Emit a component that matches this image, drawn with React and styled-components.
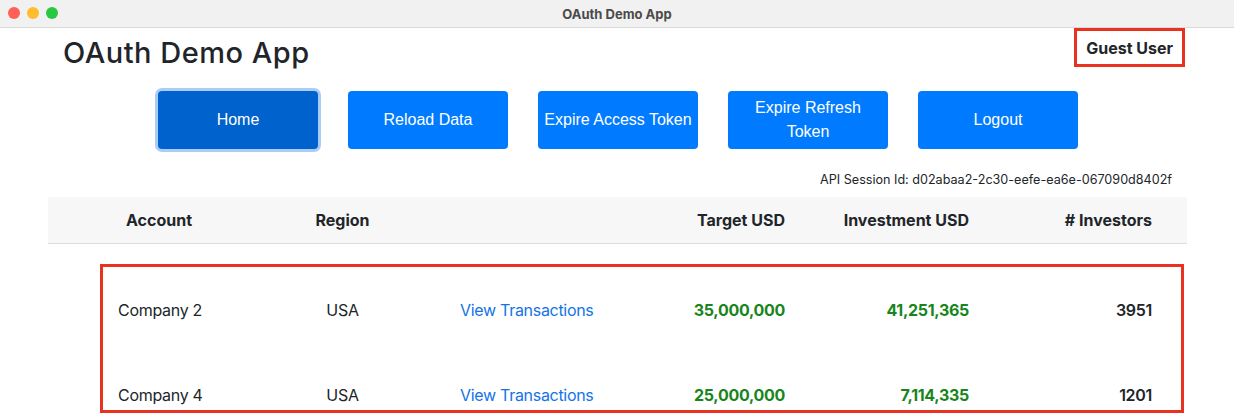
import React from "react";
import styled, { createGlobalStyle } from "styled-components";

const GlobalStyle = createGlobalStyle`
  body {
    margin: 0;
    background: #fff;
    font-family: Inter, "Noto Sans", sans-serif;
    color: #212529;
  }
`;

const Window = styled.div`
  width: 1234px;
  height: 417px;
  overflow: hidden;
  background: #fff;
`;

const TitleBar = styled.div`
  height: 27px;
  display: flex;
  align-items: center;
  justify-content: center;
  position: relative;
  background: #f1f1f1;
  border-bottom: 1px solid #dadada;
  font-size: 13px;
  font-weight: 700;
  color: #4a4a4a;
`;

const Lights = styled.div`
  position: absolute;
  left: 8px;
  top: 7px;
  display: flex;
  gap: 7px;
`;

const Light = styled.span`
  width: 12px;
  height: 12px;
  border-radius: 50%;
  background: ${(p) => p.color};
`;

const Header = styled.div`
  display: flex;
  justify-content: space-between;
  align-items: flex-start;
  padding: 0 49px 0 63px;
`;

const Title = styled.h1`
  margin: 8px 0 0;
  font-size: 29px;
  line-height: 34px;
  letter-spacing: 0.5px;
  font-weight: 500;
  color: #212529;
`;

const UserBadge = styled.div`
  border: 3px solid #e8321f;
  padding: 0 9px;
  height: 33px;
  display: flex;
  align-items: center;
  font-size: 16px;
  font-weight: 700;
  color: #212529;
`;

const Toolbar = styled.div`
  display: flex;
  justify-content: center;
  gap: 30px;
  margin-top: 21px;
  padding-left: 2px;
`;

const Button = styled.button`
  width: 160px;
  height: 58px;
  padding: 0 4px;
  border: none;
  border-radius: 4px;
  background: ${(p) => (p.active ? "#0062cc" : "#007bff")};
  box-shadow: ${(p) => (p.active ? "0 0 0 3px #a9cdf7" : "none")};
  color: #fff;
  font-family: "Liberation Sans", Arial, sans-serif;
  font-size: 16px;
  line-height: 24px;
  cursor: pointer;
`;

const Session = styled.div`
  margin-top: 22px;
  padding-right: 62px;
  text-align: right;
  font-size: 12.6px;
  line-height: 18px;
  color: #212529;
`;

const TableArea = styled.div`
  margin: 8px 47px 0 48px;
`;

const Grid = styled.div`
  display: grid;
  grid-template-columns: ${(p) => p.first}px 145px 185px 185px 184px 183px;
  align-items: center;
`;

const HeadRow = styled(Grid)`
  height: 46px;
  background: #f7f7f7;
  border-bottom: 1px solid #dcdcdc;
  font-size: 16px;
  font-weight: 700;
`;

const Cell = styled.div`
  text-align: ${(p) => p.align || "left"};
  padding-left: ${(p) => p.indent || 0}px;
  color: ${(p) => (p.tone === "money" ? "#18851c" : p.tone === "link" ? "#1473e6" : "#212529")};
  font-weight: ${(p) => (p.tone === "money" ? 700 : p.tone === "count" ? 600 : "inherit")};
`;

const Rows = styled.div`
  margin: 20px 3px 0 52px;
  height: 143px;
  overflow: hidden;
  border: 3px solid #e8321f;
`;

const DataRow = styled(Grid)`
  height: 85px;
  font-size: 16px;
  letter-spacing: -0.3px;
`;

const Link = styled.a`
  color: inherit;
  text-decoration: none;
`;

const accounts = [
  { name: "Company 2", region: "USA", target: "35,000,000", invested: "41,251,365", investors: 3951 },
  { name: "Company 4", region: "USA", target: "25,000,000", invested: "7,114,335", investors: 1201 },
];

export default function App() {
  return (
    <Window>
      <GlobalStyle />
      <TitleBar>
        <Lights>
          <Light color="#fe5f57" />
          <Light color="#febc2e" />
          <Light color="#28c840" />
        </Lights>
        OAuth Demo App
      </TitleBar>

      <Header>
        <Title>OAuth Demo App</Title>
        <UserBadge>Guest User</UserBadge>
      </Header>

      <Toolbar>
        <Button active>Home</Button>
        <Button>Reload Data</Button>
        <Button>Expire Access Token</Button>
        <Button>Expire Refresh Token</Button>
        <Button>Logout</Button>
      </Toolbar>

      <Session>API Session Id: d02abaa2-2c30-eefe-ea6e-067090d8402f</Session>

      <TableArea>
        <HeadRow first={222}>
          <Cell align="center">Account</Cell>
          <Cell align="center">Region</Cell>
          <Cell />
          <Cell align="right">Target USD</Cell>
          <Cell align="right">Investment USD</Cell>
          <Cell align="right"># Investors</Cell>
        </HeadRow>

        <Rows>
          {accounts.map((a) => (
            <DataRow first={167} key={a.name}>
              <Cell indent={15}>{a.name}</Cell>
              <Cell align="center">{a.region}</Cell>
              <Cell indent={45} tone="link">
                <Link href="#">View Transactions</Link>
              </Cell>
              <Cell align="right" tone="money">{a.target}</Cell>
              <Cell align="right" tone="money">{a.invested}</Cell>
              <Cell align="right" tone="count">{a.investors}</Cell>
            </DataRow>
          ))}
        </Rows>
      </TableArea>
    </Window>
  );
}
